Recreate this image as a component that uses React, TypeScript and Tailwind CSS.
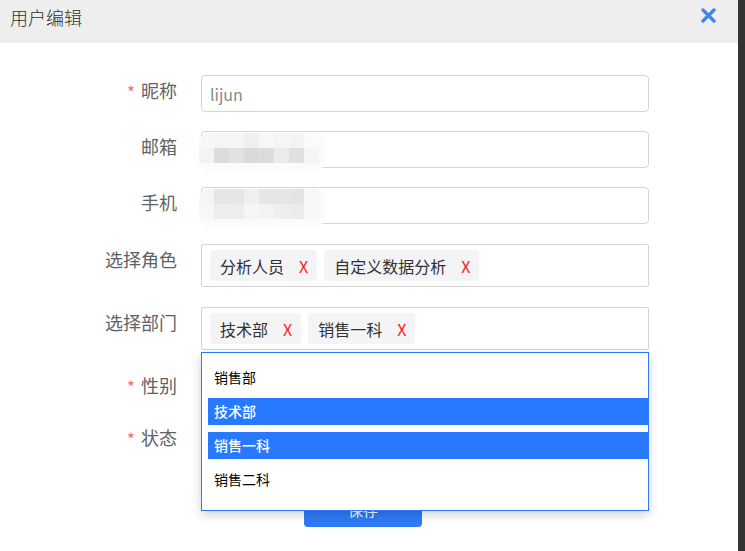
const font = { fontFamily: '"Noto Sans CJK SC", "Noto Sans", sans-serif' };

const emailCells = [
  ["#f7f7f7", "#f5f5f5", "#f5f5f5", "#efefef", "#f7f7f7", "#f5f5f5", "#f3f3f3", "#fafafa"],
  ["#f3f3f3", "#dcdcdc", "#e2e2e2", "#dadada", "#dcdcdc", "#ebebeb", "#e0e0e0", "#f5f5f5"],
];
const phoneCells = [
  ["#f5f5f5", "#e6e6e6", "#e6e6e6", "#f0f0f0", "#e6e6e6", "#e6e6e6", "#e4e4e4", "#f7f7f7"],
  ["#f7f7f7", "#eeeeee", "#ededed", "#f5f5f5", "#f3f3f3", "#eeeeee", "#ebebeb", "#f7f7f7"],
];

const Label = ({ text, required }: { text: string; required?: boolean }) => (
  <div className="w-[177px] h-[31px] shrink-0 flex items-center justify-end text-[18px] leading-[31px] text-[#606266]">
    {required && <span className="text-[#f56c6c] text-[17px] mr-[6px] mt-[2px]">*</span>}
    {text}
  </div>
);

// blurred / pixelated overlay for masked values
const Mosaic = ({ cells }: { cells: string[][] }) => (
  <div className="absolute left-[-3px] top-[1px] w-[126px] h-[38px] rounded-[10px] bg-[#fbfbfb] overflow-hidden">
    {cells.map((row, i) => (
      <div key={i} className="flex">
        {row.map((c, j) => (
          <div key={j} className="w-[15px] h-[15px]" style={{ backgroundColor: c }} />
        ))}
      </div>
    ))}
  </div>
);

const Tag = ({ text }: { text: string }) => (
  <div className="h-[31px] flex items-center pl-[10px] pr-[9px] bg-[#f4f4f6] rounded-[4px] text-[16px] text-[#303133]">
    <span>{text}</span>
    <span className="ml-[15px] text-[#ff1a1a] text-[16px]">X</span>
  </div>
);

export default function App() {
  const options = ["销售部", "技术部", "销售一科", "销售二科"];
  const selected = ["技术部", "销售一科"];

  return (
    <div className="w-[745px] h-[551px] bg-[#333333] flex" style={font}>
      <div className="w-[738px] h-[551px] bg-white relative overflow-hidden">
        {/* header */}
        <div className="h-[43px] bg-[#eeeeee] flex items-start justify-between pl-[10px] pr-[22px] pt-[5px]">
          <span className="text-[18px] leading-[24px] text-[#303133] font-light">用户编辑</span>
          <svg width="15" height="15" viewBox="0 0 15 15" className="mt-[3px]">
            <path d="M2 2 L13 13 M13 2 L2 13" stroke="#3d86f5" strokeWidth="3.4" strokeLinecap="round" />
          </svg>
        </div>

        {/* form */}
        <div className="pt-[32px] flex flex-col">
          <div className="flex mb-[19px]">
            <Label text="昵称" required />
            <div className="ml-[24px] w-[448px] h-[37px] border border-[#d4d4d4] rounded-[4px] flex items-center px-[8px] text-[16px] text-[#8a8a8a]">
              lijun
            </div>
          </div>
          <div className="flex mb-[19px]">
            <Label text="邮箱" />
            <div className="ml-[24px] w-[448px] h-[37px] border border-[#d4d4d4] rounded-[4px] relative">
              <Mosaic cells={emailCells} />
            </div>
          </div>
          <div className="flex mb-[20px]">
            <Label text="手机" />
            <div className="ml-[24px] w-[448px] h-[37px] border border-[#d4d4d4] rounded-[4px] relative">
              <Mosaic cells={phoneCells} />
            </div>
          </div>
          <div className="flex mb-[20px]">
            <Label text="选择角色" />
            <div className="ml-[24px] w-[448px] h-[43px] border border-[#d4d4d4] rounded-[2px] flex items-center gap-[7px] px-[8px]">
              <Tag text="分析人员" />
              <Tag text="自定义数据分析" />
            </div>
          </div>
          <div className="flex mb-[20px]">
            <Label text="选择部门" />
            <div className="ml-[24px] w-[448px] h-[43px] border border-[#d4d4d4] rounded-[2px] flex items-center gap-[7px] px-[8px]">
              <Tag text="技术部" />
              <Tag text="销售一科" />
            </div>
          </div>
          <div className="flex mb-[20px] h-[32px]">
            <Label text="性别" required />
          </div>
          <div className="flex h-[32px]">
            <Label text="状态" required />
          </div>
          <div className="mt-[39px] ml-[304px] w-[118px] h-[34px] bg-[#2f7bf6] rounded-[4px] flex items-center justify-center text-white text-[15px]">
            保存
          </div>
        </div>

        {/* dropdown list */}
        <div className="absolute left-[201px] top-[352px] w-[448px] h-[159px] bg-white border border-[#2979ff] shadow-[0_4px_10px_rgba(0,0,0,0.18)] pt-[11px] pl-[6px] flex flex-col gap-[7px]">
          {options.map((o) => {
            const on = selected.includes(o);
            return (
              <div
                key={o}
                className={
                  on
                    ? "h-[27px] flex items-center px-[6px] text-[14px] bg-[#2979ff] text-white font-medium"
                    : "h-[27px] flex items-center px-[6px] text-[14px] text-black"
                }
              >
                {o}
              </div>
            );
          })}
        </div>
      </div>
    </div>
  );
}
